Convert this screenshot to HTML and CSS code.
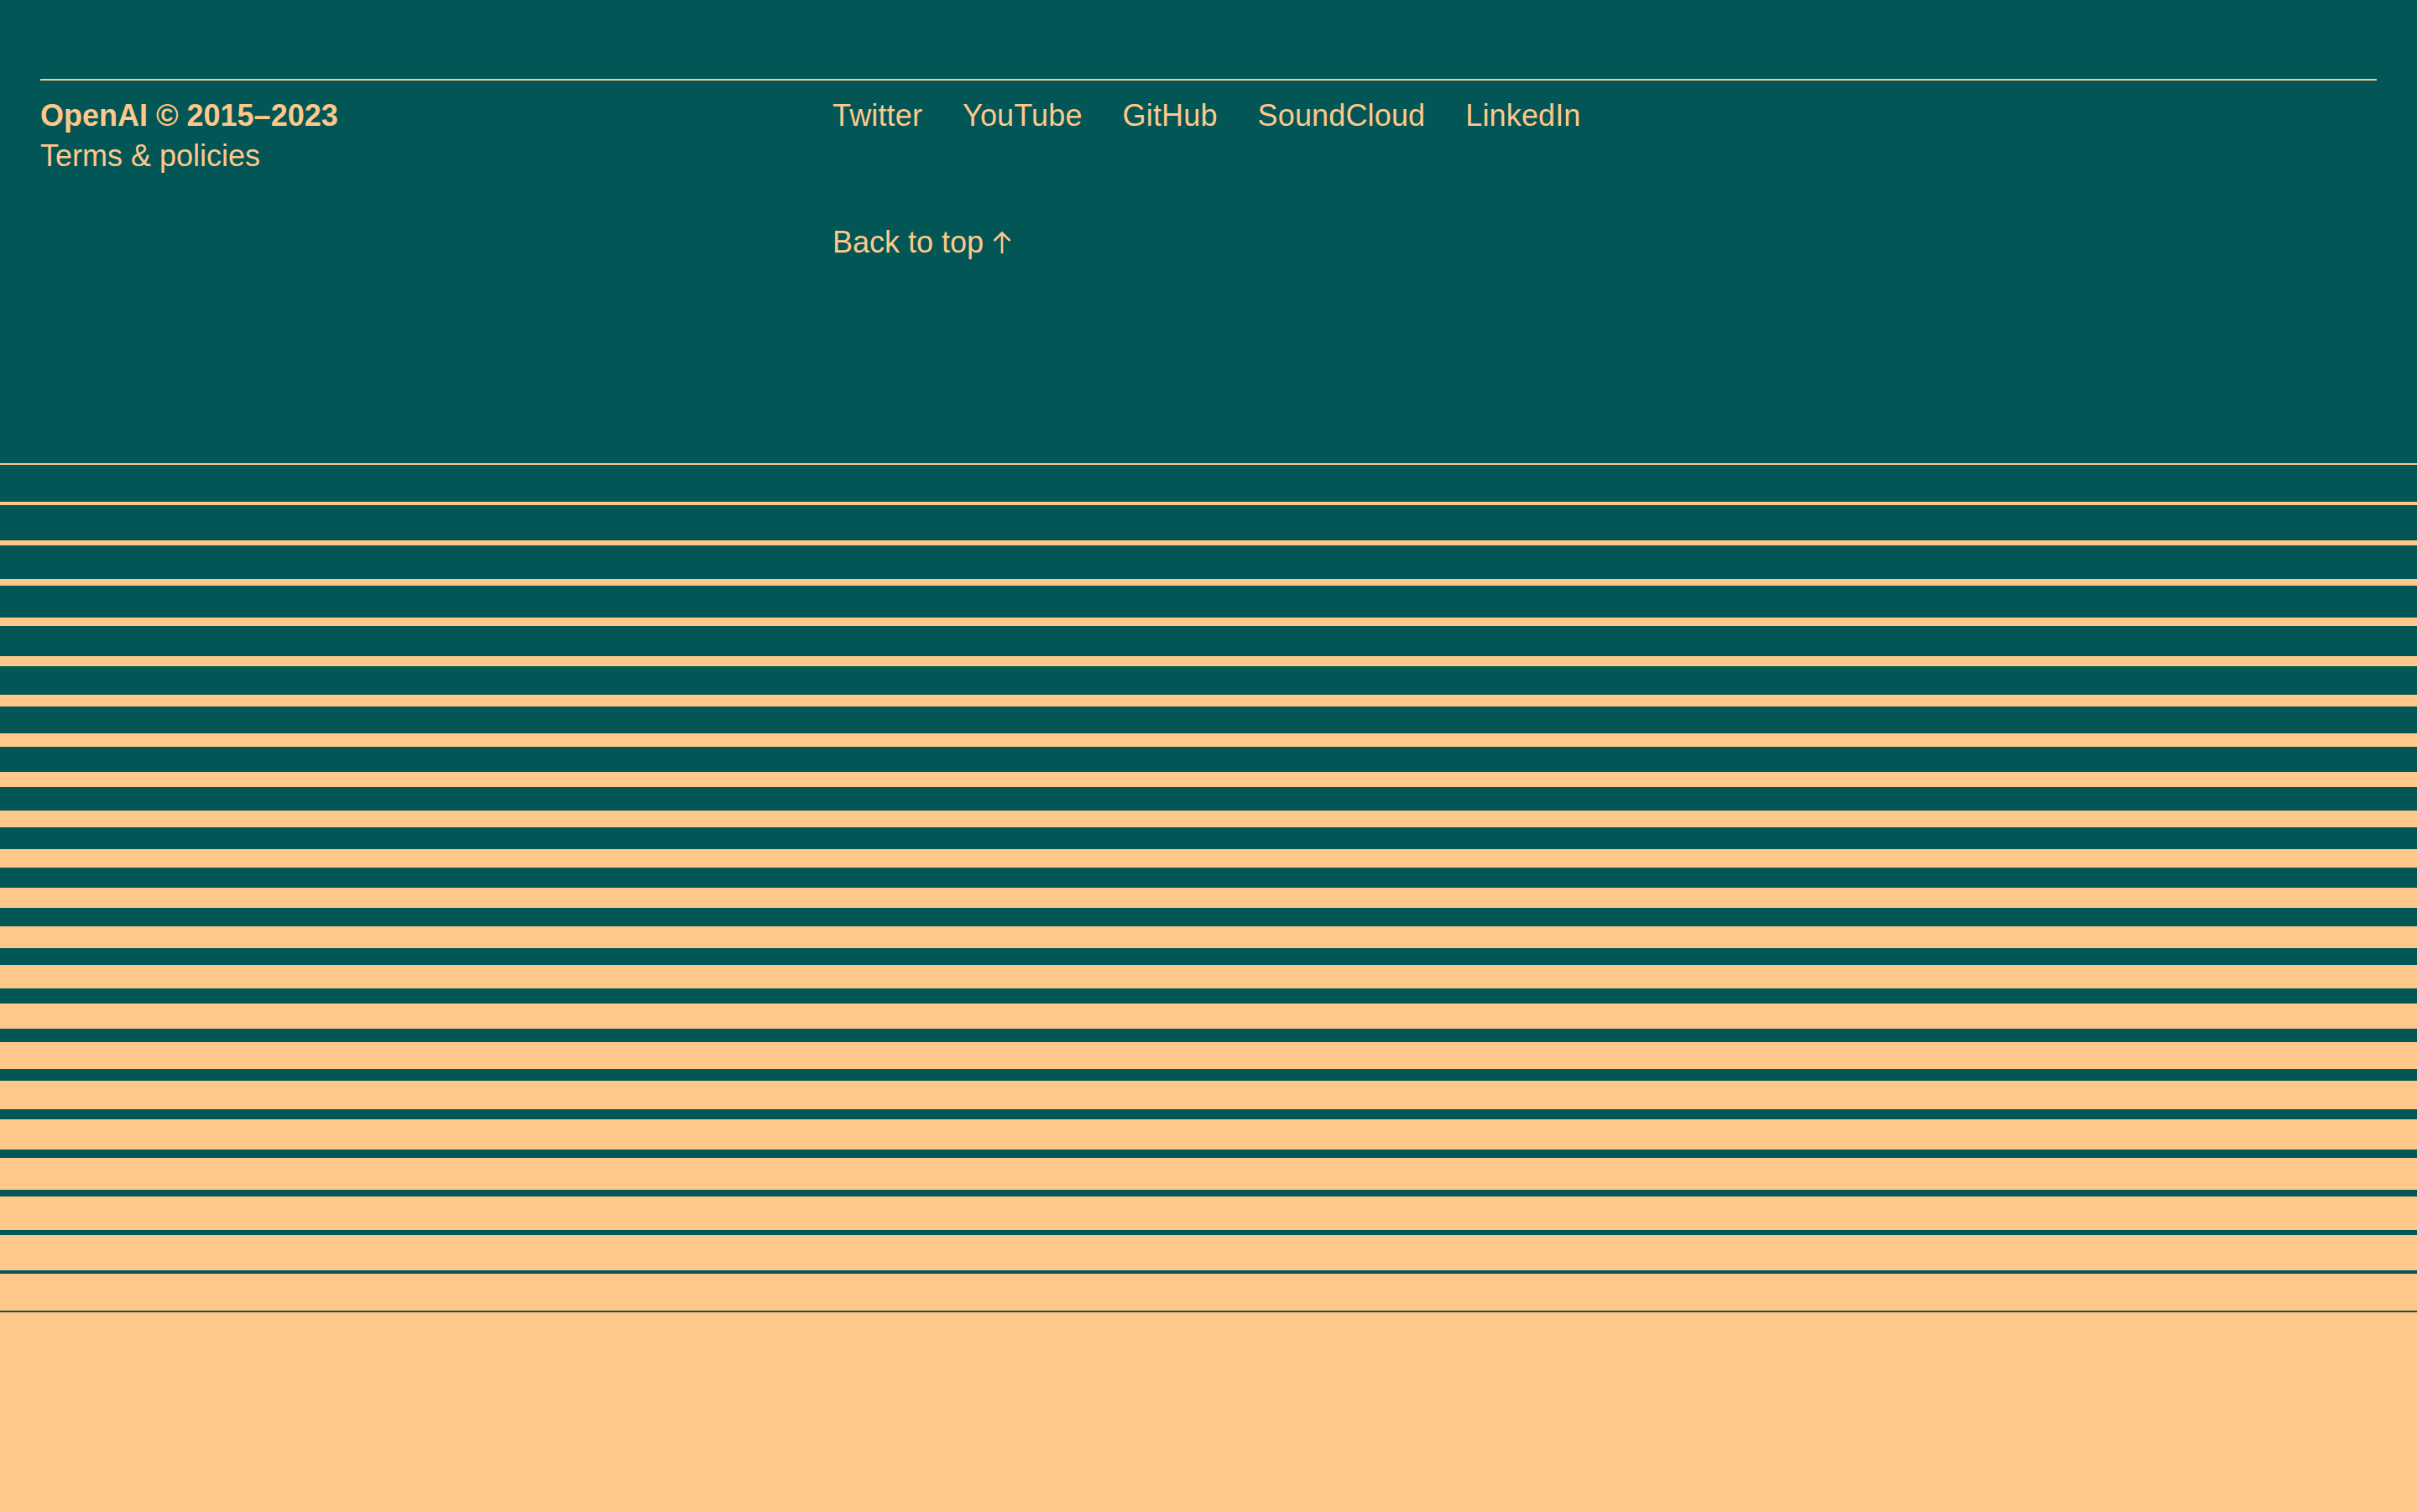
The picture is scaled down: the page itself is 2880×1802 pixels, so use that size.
FILE: index.html
```html
<!DOCTYPE html>
<html lang="en">
<head>
<meta charset="utf-8">
<title>OpenAI footer</title>
<link rel="stylesheet" href="styles.css">
</head>
<body>
<footer class="footer">
  <div class="footer-inner">
    <div class="col-left">
      <div class="copyright">OpenAI © 2015–2023</div>
      <a class="link" href="#">Terms &amp; policies</a>
    </div>
    <div class="col-right">
      <nav class="social">
        <a class="link" href="#">Twitter</a>
        <a class="link" href="#">YouTube</a>
        <a class="link" href="#">GitHub</a>
        <a class="link" href="#">SoundCloud</a>
        <a class="link" href="#">LinkedIn</a>
      </nav>
      <a class="link back" href="#">Back to top <svg class="arrow" viewBox="0 0 22 26" width="22" height="26" aria-hidden="true"><path d="M11 1.5V26M1.5 11L11 1.5L20.5 11" fill="none" stroke="currentColor" stroke-width="2.6"/></svg></a>
    </div>
  </div>
</footer>
<div class="stripes">
  <div class="stripe"><div class="bar" style="height:2px"></div></div>
  <div class="stripe"><div class="bar" style="height:4px"></div></div>
  <div class="stripe"><div class="bar" style="height:6px"></div></div>
  <div class="stripe"><div class="bar" style="height:8px"></div></div>
  <div class="stripe"><div class="bar" style="height:10px"></div></div>
  <div class="stripe"><div class="bar" style="height:12px"></div></div>
  <div class="stripe"><div class="bar" style="height:14px"></div></div>
  <div class="stripe"><div class="bar" style="height:16px"></div></div>
  <div class="stripe"><div class="bar" style="height:18px"></div></div>
  <div class="stripe"><div class="bar" style="height:20px"></div></div>
  <div class="stripe"><div class="bar" style="height:22px"></div></div>
  <div class="stripe"><div class="bar" style="height:24px"></div></div>
  <div class="stripe"><div class="bar" style="height:26px"></div></div>
  <div class="stripe"><div class="bar" style="height:28px"></div></div>
  <div class="stripe"><div class="bar" style="height:30px"></div></div>
  <div class="stripe"><div class="bar" style="height:32px"></div></div>
  <div class="stripe"><div class="bar" style="height:34px"></div></div>
  <div class="stripe"><div class="bar" style="height:36px"></div></div>
  <div class="stripe"><div class="bar" style="height:38px"></div></div>
  <div class="stripe"><div class="bar" style="height:40px"></div></div>
  <div class="stripe"><div class="bar" style="height:42px"></div></div>
  <div class="stripe"><div class="bar" style="height:44px"></div></div>
</div>
<div class="tail"></div>
</body>
</html>
```
FILE: styles.css
```css
html, body {
  margin: 0;
  padding: 0;
  background: #ffc88b;
}
body {
  font-family: "Liberation Sans", Arial, sans-serif;
  font-size: 36px;
  line-height: 48px;
  color: #ffc88b;
}
.footer {
  background: #025655;
  height: 552px;
  box-sizing: border-box;
  padding: 94px 48px 0;
}
.footer-inner {
  border-top: 2px solid #ffc88b;
  padding-top: 18px;
  display: grid;
  grid-template-columns: 944px 1fr;
}
.col-left {
  display: flex;
  flex-direction: column;
  align-items: flex-start;
}
.copyright {
  font-weight: 700;
}
.link {
  color: #ffc88b;
  text-decoration: none;
}
.col-right {
  display: flex;
  flex-direction: column;
  align-items: flex-start;
}
.social {
  display: flex;
  gap: 48px;
}
.social .link {
  letter-spacing: 0.15px;
}
.back {
  margin-top: 103px;
}
.arrow {
  display: inline-block;
  vertical-align: -1px;
  margin-left: 1px;
}
.stripes {
  display: flex;
  flex-direction: column;
}
.stripe {
  height: 46px;
  background: #025655;
}
.bar {
  background: #ffc88b;
}
.tail {
  height: 238px;
  background: #ffc88b;
}
```
